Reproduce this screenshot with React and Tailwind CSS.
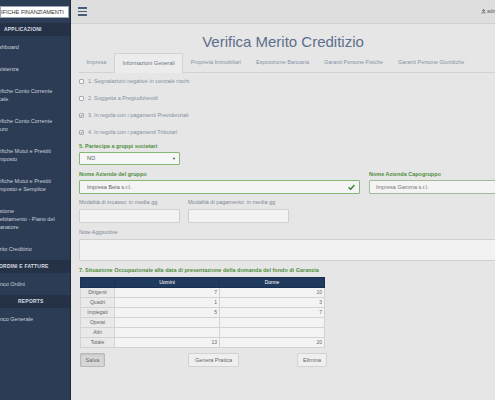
import React from 'react';
import { User } from 'lucide-react';

const font = { fontFamily: '"Liberation Sans", Arial, sans-serif' };

const menu = [
  { lines: ['Dashboard'] },
  { lines: ['Assistenza'] },
  { lines: ['Verifiche Conto Corrente', 'Locale'] },
  { lines: ['Verifiche Conto Corrente', 'Futuro'] },
  { lines: ['Verifiche Mutui e Prestiti', 'Composto'] },
  { lines: ['Verifiche Mutui e Prestiti', 'Composto e Semplice'] },
  { lines: ['Gestione', 'Indebitamento - Piano del', 'Risanatore'] },
  { lines: ['Merito Creditizio'] },
];

const checks = [
  { text: '1. Segnalazioni negative in centrale rischi', on: false },
  { text: '2. Soggetta a Pregiudizievoli', on: false },
  { text: '3. In regola con i pagamenti Previdenziali', on: true },
  { text: '4. In regola con i pagamenti Tributari', on: true },
];

const tabs = [
  'Impresa',
  'Informazioni Generali',
  'Proprietà Immobiliari',
  'Esposizione Bancaria',
  'Garanti Persone Fisiche',
  'Garanti Persone Giuridiche',
];

const rows = [
  ['Dirigenti', '7', '10'],
  ['Quadri', '1', '3'],
  ['Impiegati', '5', '7'],
  ['Operai', '', ''],
  ['Altri', '', ''],
  ['Totale', '13', '20'],
];

const Band = ({ children, pad }) => (
  <div className={`h-[13px] bg-[#253147] flex items-center text-[5px] font-bold tracking-[0.2px] text-[#d9dee6] whitespace-nowrap ${pad}`}>
    {children}
  </div>
);

const Item = ({ lines }) => (
  <div className="py-[7px] -ml-[8px] text-[5.5px] leading-[8px] text-[#c9d0db] whitespace-nowrap">
    {lines.map((l) => (
      <div key={l}>{l}</div>
    ))}
  </div>
);

const Sidebar = () => (
  <div className="w-[71px] shrink-0 bg-[#2d3c55] overflow-hidden border-r border-[#1f2a3c]">
    <div className="h-[23px] pt-[6px]">
      <div className="h-[12px] w-[69px] bg-white border border-[#9aa4b2] overflow-hidden flex items-center">
        <span className="-ml-[11.5px] text-[5.6px] text-[#333] whitespace-nowrap">VERIFICHE FINANZIAMENTI</span>
      </div>
    </div>
    <Band pad="pl-[4px]">APPLICAZIONI</Band>
    {menu.map((m, i) => (
      <Item key={i} lines={m.lines} />
    ))}
    <Band pad="-ml-[1px]">ORDINI E FATTURE</Band>
    <Item lines={['Elenco Ordini']} />
    <Band pad="pl-[18px]">REPORTS</Band>
    <Item lines={['Elenco Generale']} />
  </div>
);

const Check = ({ on }) => (
  <div className="w-[5px] h-[5px] border border-[#a9adb3] bg-[#f6f6f6] rounded-[1px] flex items-center justify-center">
    {on && (
      <svg width="5" height="5" viewBox="0 0 10 10">
        <path d="M1.5 5.5 L4 8 L8.5 2" stroke="#333" strokeWidth="2.2" fill="none" />
      </svg>
    )}
  </div>
);

const Label = ({ children, green, className = '' }) => (
  <div className={`h-[10px] flex items-center text-[5.5px] whitespace-nowrap ${green ? 'text-[#4e8f3d] font-bold' : 'text-[#7d8898]'} ${className}`}>
    {children}
  </div>
);

export default function App() {
  return (
    <div className="w-[495px] h-[400px] flex overflow-hidden bg-[#e6e6e6]" style={font}>
      <Sidebar />
      <div className="flex-1 min-w-0 overflow-hidden">
        <div className="h-[24px] bg-[#dedede] border-b border-[#d0d0d0] flex items-center justify-between pl-[7px]">
          <div className="flex flex-col gap-[2px]">
            <div className="w-[9px] h-[1.5px] bg-[#4b5d78]" />
            <div className="w-[9px] h-[1.5px] bg-[#4b5d78]" />
            <div className="w-[9px] h-[1.5px] bg-[#4b5d78]" />
          </div>
          <div className="flex items-center gap-[1px] text-[5px] text-[#555] w-[14px] overflow-hidden whitespace-nowrap">
            <User size={5} strokeWidth={3} className="text-[#444] shrink-0" />
            admin
          </div>
        </div>

        <div className="pl-[8px]">
          <div className="h-[30px] pt-[6px] text-center text-[15px] leading-[24px] text-[#5c6f8c] whitespace-nowrap -ml-[8px]">
            Verifica Merito Creditizio
          </div>

          <div className="h-[19px] flex items-end border-b border-[#d2d2d2] w-[430px]">
            {tabs.map((t, i) => (
              <div
                key={t}
                className={`h-[19px] px-[7.5px] flex items-center text-[5.5px] whitespace-nowrap ${
                  i === 1
                    ? 'bg-[#ececec] border border-b-0 border-[#d2d2d2] text-[#6b7686] -mb-px h-[20px]'
                    : 'text-[#8593a8]'
                }`}
              >
                {t}
              </div>
            ))}
          </div>

          {checks.map((c) => (
            <div key={c.text} className="h-[17px] flex items-center gap-[4px] text-[5.5px] text-[#8390a3] whitespace-nowrap">
              <Check on={c.on} />
              {c.text}
            </div>
          ))}

          <Label green>5. Partecipa a gruppi societari</Label>
          <div className="mt-[1px] h-[13px] w-[101px] border border-[#86b673] bg-[#f6f6f6] rounded-[1px] flex items-center justify-between pl-[7px] pr-[3px] text-[5.5px] text-[#555]">
            NO
            <span className="text-[4px]">▼</span>
          </div>

          <div className="mt-[4px] flex gap-[9px] w-[440px]">
            <div className="w-[281px] shrink-0">
              <Label green>Nome Aziende del gruppo</Label>
              <div className="mt-[1px] h-[14px] border border-[#86b673] bg-[#f4f4f4] rounded-[1px] flex items-center justify-between pl-[7px] pr-[4px] text-[5.5px] text-[#666]">
                Impresa Beta s.r.l.
                <svg width="7" height="6" viewBox="0 0 12 10">
                  <path d="M1 5.5 L4.5 9 L11 1.5" stroke="#3e8a35" strokeWidth="2.6" fill="none" />
                </svg>
              </div>
            </div>
            <div className="flex-1">
              <Label green>Nome Azienda Capogruppo</Label>
              <div className="mt-[1px] h-[14px] border border-[#a3bb98] bg-[#f4f4f4] rounded-[1px] flex items-center pl-[6px] text-[5.5px] text-[#777]">
                Impresa Gamma s.r.l.
              </div>
            </div>
          </div>

          <div className="mt-[3px] flex gap-[8px]">
            <div className="w-[101px]">
              <Label>Modalità di incasso: in media gg</Label>
              <div className="mt-[2px] h-[14px] border border-[#d0d0d0] bg-[#f2f2f2] rounded-[1px]" />
            </div>
            <div className="w-[101px]">
              <Label>Modalità di pagamento: in media gg</Label>
              <div className="mt-[2px] h-[14px] border border-[#d0d0d0] bg-[#f2f2f2] rounded-[1px]" />
            </div>
          </div>

          <Label className="mt-[4px]">Note Aggiuntive</Label>
          <div className="mt-[2px] h-[22px] w-[440px] border border-[#d0d0d0] bg-[#f2f2f2] rounded-[1px]" />

          <Label green className="mt-[4px]">
            7. Situazione Occupazionale alla data di presentazione della domanda del fondo di Garanzia
          </Label>

          <table className="mt-[2px] ml-[1px] w-[244px] border-collapse text-[5px] table-fixed">
            <colgroup>
              <col className="w-[34px]" />
              <col className="w-[105px]" />
              <col className="w-[105px]" />
            </colgroup>
            <thead>
              <tr className="h-[10px] bg-[#1f3a5d] text-white">
                <th className="border border-[#1a3050]" />
                <th className="border border-[#1a3050] font-normal">Uomini</th>
                <th className="border border-[#1a3050] font-normal">Donne</th>
              </tr>
            </thead>
            <tbody>
              {rows.map((r) => (
                <tr key={r[0]} className="h-[10px] text-[#666]">
                  <td className="border border-[#d3d3d3] bg-[#e9e9e9] text-center p-0">{r[0]}</td>
                  <td className="border border-[#d3d3d3] bg-[#f3f3f3] text-right pr-[2px] p-0">{r[1]}</td>
                  <td className="border border-[#d3d3d3] bg-[#f3f3f3] text-right pr-[2px] p-0">{r[2]}</td>
                </tr>
              ))}
            </tbody>
          </table>

          <div className="mt-[5px] flex items-center text-[5.5px] text-[#666]">
            <div className="ml-[1px] w-[25px] h-[14px] flex items-center justify-center bg-[#d6d6d6] border border-[#b9b9b9] rounded-[1px] shadow-[inset_0_1px_2px_rgba(0,0,0,0.1)]">
              Salva
            </div>
            <div className="ml-[83px] w-[51px] h-[14px] flex items-center justify-center bg-[#efefef] border border-[#d2d2d2] rounded-[1px]">
              Genera Pratica
            </div>
            <div className="ml-[58px] w-[30px] h-[14px] flex items-center justify-center bg-[#efefef] border border-[#d2d2d2] rounded-[1px]">
              Elimina
            </div>
          </div>
        </div>
      </div>
    </div>
  );
}
